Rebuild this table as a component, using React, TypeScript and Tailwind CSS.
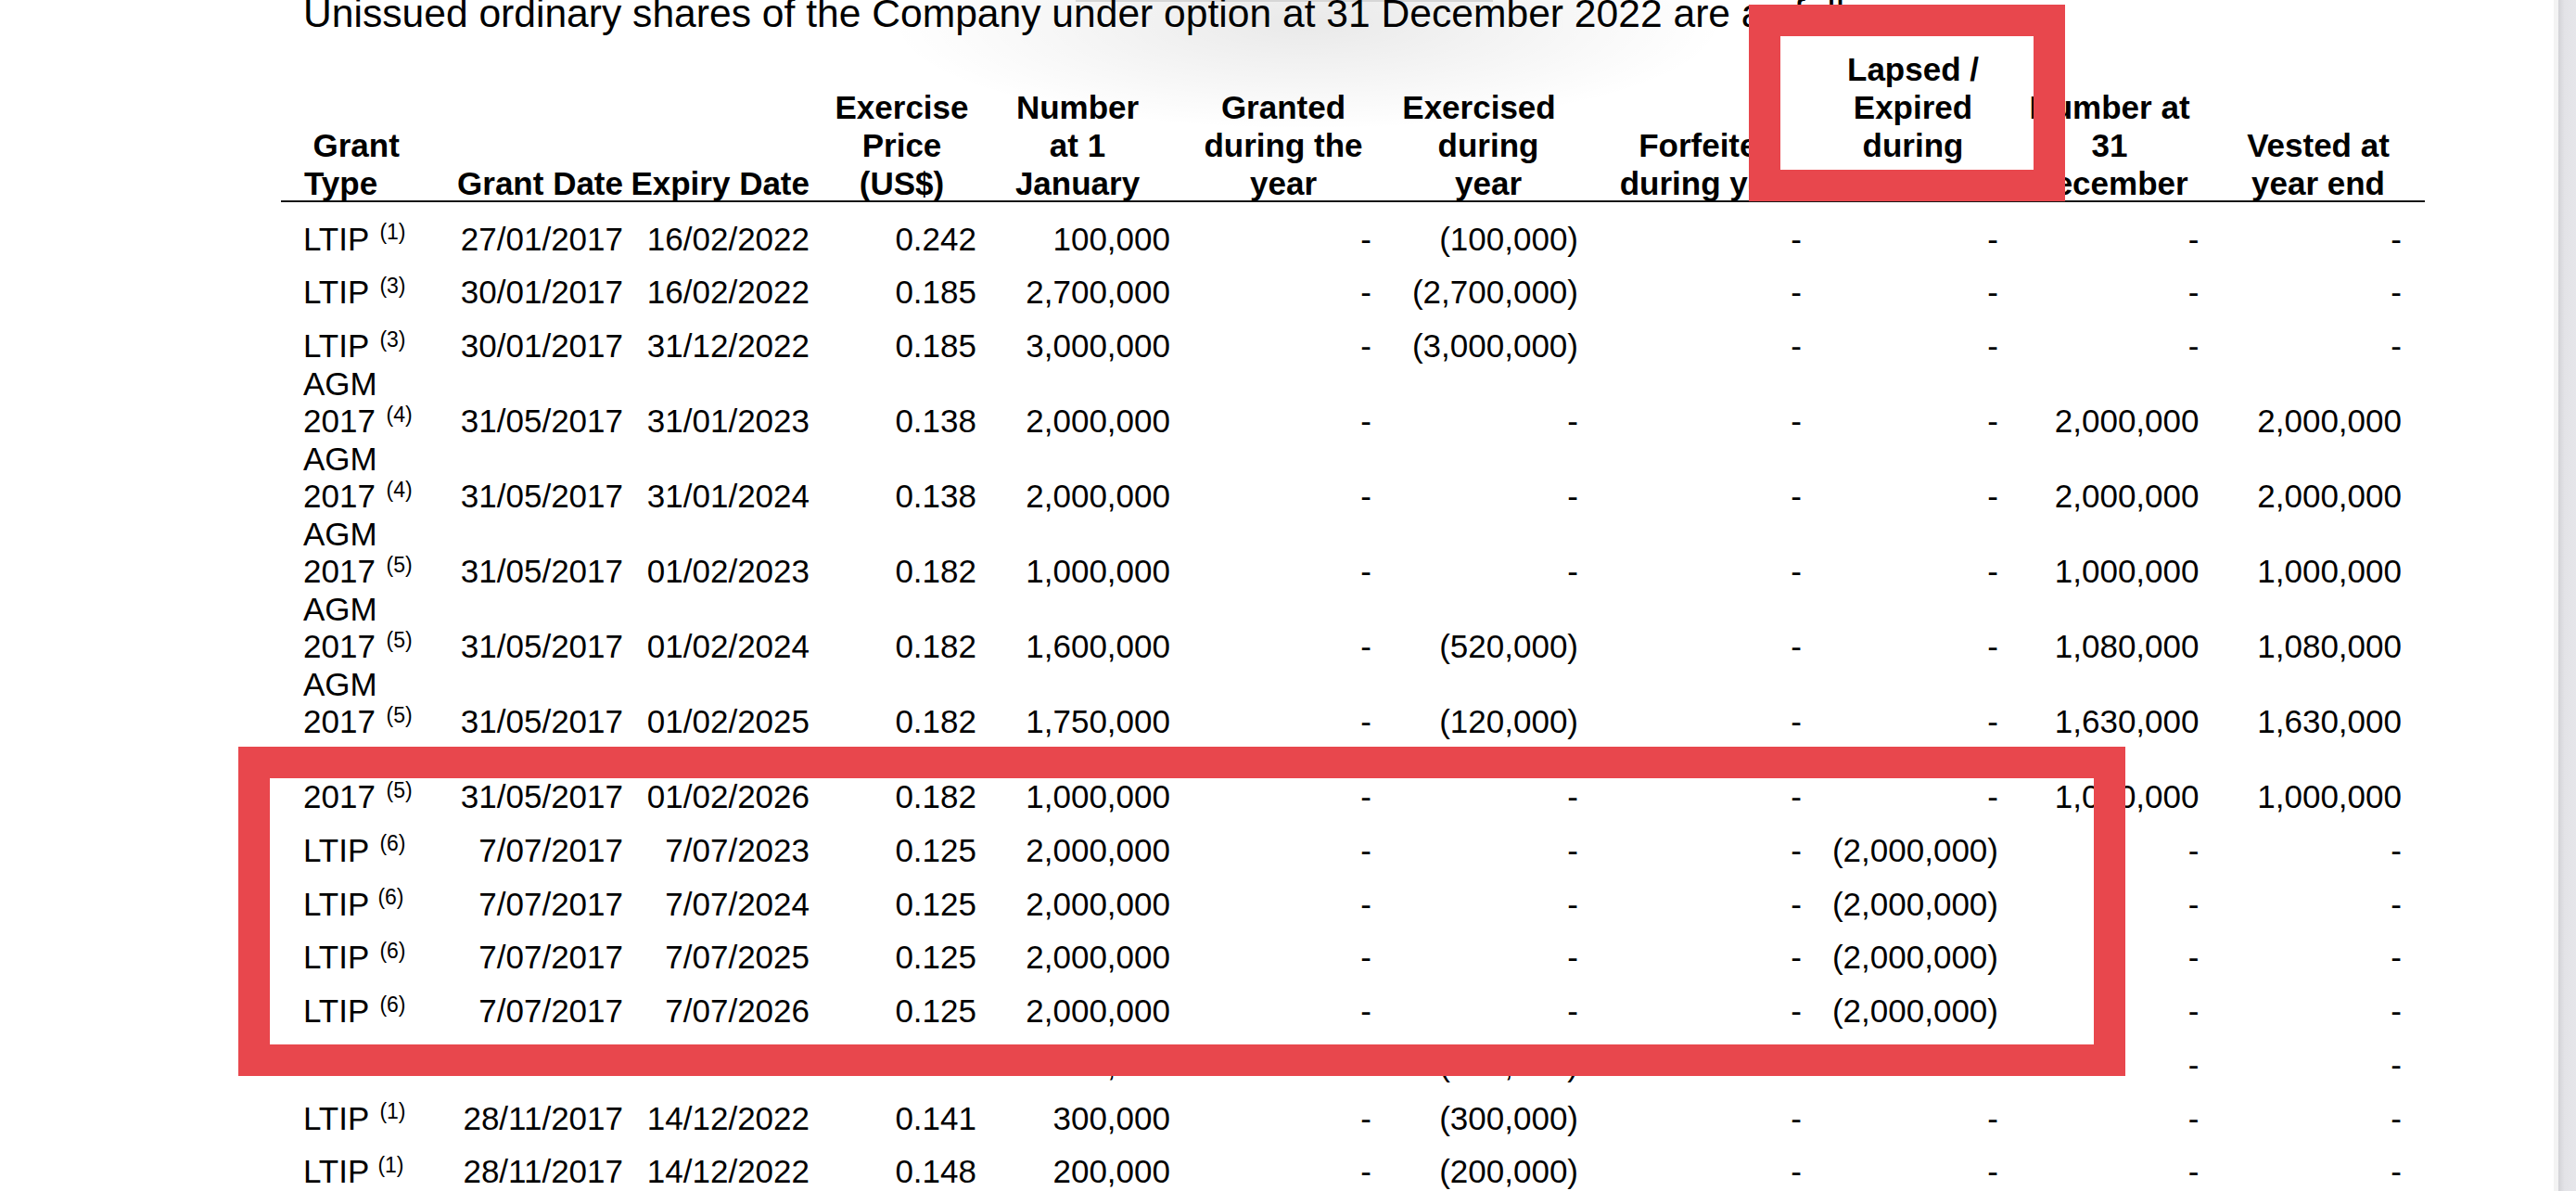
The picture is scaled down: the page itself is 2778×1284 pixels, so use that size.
import React from "react";

const GRID =
  "grid grid-cols-[176px_204px_208px_173px_223px_205px_226px_233px_229px_207px_228px]";

const PR = [
  "pl-[24px]",
  "pr-[11px]",
  "pr-[18px]",
  "pr-[11px]",
  "pr-[25px]",
  "pr-[13px]",
  "pr-[16px]",
  "pr-[8px]",
  "pr-[25px]",
  "pr-[15.5px]",
  "pr-[25px]",
];

type HLine = { t: string; c?: string };
type Head = { c: string; lines: HLine[] };

const HEADS: Head[] = [
  { c: "items-start", lines: [{ t: "Grant", c: "pl-[34.5px]" }, { t: "Type", c: "pl-[25px]" }] },
  { c: "items-end pr-[11px]", lines: [{ t: "Grant Date" }] },
  { c: "items-end pr-[18px]", lines: [{ t: "Expiry Date" }] },
  { c: "items-center pr-[10px]", lines: [{ t: "Exercise" }, { t: "Price" }, { t: "(US$)" }] },
  { c: "items-center pr-[27px]", lines: [{ t: "Number" }, { t: "at 1" }, { t: "January" }] },
  { c: "items-center pr-[11px]", lines: [{ t: "Granted" }, { t: "during the" }, { t: "year" }] },
  { c: "items-center", lines: [{ t: "Exercised", c: "pr-[20px]" }, { t: "during" }, { t: "year" }] },
  { c: "items-center pl-[15px]", lines: [{ t: "Forfeited" }, { t: "during year" }] },
  { c: "items-center pr-[5px]", lines: [{ t: "Lapsed /" }, { t: "Expired" }, { t: "during" }, { t: "year" }] },
  { c: "items-center pr-[17px]", lines: [{ t: "Number at" }, { t: "31" }, { t: "December" }] },
  { c: "items-center pr-[2px]", lines: [{ t: "Vested at" }, { t: "year end" }] },
];

type Row = { type: string[]; sup: string; tight?: boolean; cells: string[] };

const D = "-";

const ROWS: Row[] = [
  { type: ["LTIP"], sup: "(1)", cells: ["27/01/2017", "16/02/2022", "0.242", "100,000", D, "(100,000)", D, D, D, D] },
  { type: ["LTIP"], sup: "(3)", cells: ["30/01/2017", "16/02/2022", "0.185", "2,700,000", D, "(2,700,000)", D, D, D, D] },
  { type: ["LTIP"], sup: "(3)", cells: ["30/01/2017", "31/12/2022", "0.185", "3,000,000", D, "(3,000,000)", D, D, D, D] },
  { type: ["AGM", "2017"], sup: "(4)", cells: ["31/05/2017", "31/01/2023", "0.138", "2,000,000", D, D, D, D, "2,000,000", "2,000,000"] },
  { type: ["AGM", "2017"], sup: "(4)", cells: ["31/05/2017", "31/01/2024", "0.138", "2,000,000", D, D, D, D, "2,000,000", "2,000,000"] },
  { type: ["AGM", "2017"], sup: "(5)", cells: ["31/05/2017", "01/02/2023", "0.182", "1,000,000", D, D, D, D, "1,000,000", "1,000,000"] },
  { type: ["AGM", "2017"], sup: "(5)", cells: ["31/05/2017", "01/02/2024", "0.182", "1,600,000", D, "(520,000)", D, D, "1,080,000", "1,080,000"] },
  { type: ["AGM", "2017"], sup: "(5)", cells: ["31/05/2017", "01/02/2025", "0.182", "1,750,000", D, "(120,000)", D, D, "1,630,000", "1,630,000"] },
  { type: ["AGM", "2017"], sup: "(5)", cells: ["31/05/2017", "01/02/2026", "0.182", "1,000,000", D, D, D, D, "1,000,000", "1,000,000"] },
  { type: ["LTIP"], sup: "(6)", cells: ["7/07/2017", "7/07/2023", "0.125", "2,000,000", D, D, D, "(2,000,000)", D, D] },
  { type: ["LTIP"], sup: "(6)", tight: true, cells: ["7/07/2017", "7/07/2024", "0.125", "2,000,000", D, D, D, "(2,000,000)", D, D] },
  { type: ["LTIP"], sup: "(6)", cells: ["7/07/2017", "7/07/2025", "0.125", "2,000,000", D, D, D, "(2,000,000)", D, D] },
  { type: ["LTIP"], sup: "(6)", cells: ["7/07/2017", "7/07/2026", "0.125", "2,000,000", D, D, D, "(2,000,000)", D, D] },
  { type: ["LTIP"], sup: "(1)", cells: ["28/11/2017", "14/12/2022", "0.130", "810,000", D, "(810,000)", D, D, D, D] },
  { type: ["LTIP"], sup: "(1)", cells: ["28/11/2017", "14/12/2022", "0.141", "300,000", D, "(300,000)", D, D, D, D] },
  { type: ["LTIP"], sup: "(1)", tight: true, cells: ["28/11/2017", "14/12/2022", "0.148", "200,000", D, "(200,000)", D, D, D, D] },
];

function TypeCell({ row }: { row: Row }) {
  const last = row.type.length - 1;
  return (
    <div className={`flex flex-col items-start whitespace-nowrap ${PR[0]}`}>
      {row.type.map((t, i) => (
        <div key={i}>
          {t}
          {i === last && (
            <>
              {" "}
              <sup className={row.tight ? "text-[23px]" : "ml-[2px] text-[23px]"}>{row.sup}</sup>
            </>
          )}
        </div>
      ))}
    </div>
  );
}

export default function App() {
  return (
    <div className="flex h-[1284px] w-[2778px] overflow-hidden bg-white font-['Liberation_Sans',Arial,sans-serif] text-black">
      <div className="relative flex-1 overflow-hidden">
        {/* soft shadow near the top */}
        <div className="pointer-events-none absolute left-[960px] top-[-90px] h-[230px] w-[900px] bg-[radial-gradient(closest-side,rgba(0,0,0,0.085),rgba(0,0,0,0))]" />
        <div className="pointer-events-none absolute left-[1160px] top-0 h-[2px] w-[450px] bg-[#d6d6d6]" />

        <div className="relative pl-[303px]">
          <div className="-mt-[10px] ml-[24px] whitespace-nowrap text-[42.6px] leading-[48px]">
            Unissued ordinary shares of the Company under option at 31 December 2022 are as follows:
          </div>

          <div className={`${GRID} mt-[16px] w-[2312px] items-end border-b-2 border-[#151515] text-[35px] font-bold leading-[41px]`}>
            {HEADS.map((h, i) => (
              <div key={i} className={`-mb-[2px] flex flex-col justify-end whitespace-nowrap ${h.c}`}>
                {h.lines.map((l, j) => (
                  <div key={j} className={l.c ?? ""}>
                    {l.t}
                  </div>
                ))}
              </div>
            ))}
          </div>

          <div className="w-[2312px] pt-[2.35px] text-[35px] leading-[40.5px]">
            {ROWS.map((r, ri) => (
              <div key={ri} className={`${GRID} min-h-[57.75px] items-end`}>
                <TypeCell row={r} />
                {r.cells.map((v, ci) => (
                  <div key={ci} className={`flex justify-end whitespace-nowrap ${PR[ci + 1]}`}>
                    {v}
                  </div>
                ))}
              </div>
            ))}
          </div>
        </div>

        {/* red highlight frames */}
        <div className="pointer-events-none absolute left-[1886px] top-[5px] h-[212px] w-[341px] border-[34px] border-[#e8474d]" />
        <div className="pointer-events-none absolute left-[257px] top-[805px] h-[355px] w-[2035px] border-[34px] border-[#e8474d]" />
      </div>
      <div className="h-full w-[24px] shrink-0 border-l-[5px] border-[#f3f3f3] bg-[linear-gradient(to_right,#d2d2d6,#e3e3e7_35%,#e6e6ea)]" />
    </div>
  );
}
